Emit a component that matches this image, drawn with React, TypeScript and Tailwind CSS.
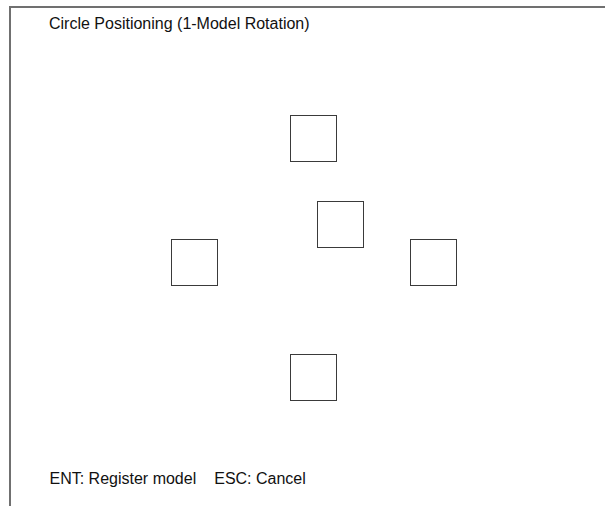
import React from "react";

const squares = [
  { left: "left-[279px]", top: "top-[107px]" },
  { left: "left-[306px]", top: "top-[193px]" },
  { left: "left-[160px]", top: "top-[231px]" },
  { left: "left-[399px]", top: "top-[231px]" },
  { left: "left-[279px]", top: "top-[346px]" },
];

const App = () => {
  return (
    <div className="w-[605px] h-[506px] bg-white overflow-hidden font-['Liberation_Sans',Arial,sans-serif] text-[16px] leading-[18px] text-[#111]">
      <div className="relative ml-[9px] mt-[6px] h-[500px] border-l-2 border-t-2 border-[#707070] flex flex-col">
        <h1 className="pl-[38px] pt-[6.5px] font-normal">
          Circle Positioning (1-Model Rotation)
        </h1>

        <div className="flex-1" />

        {squares.map((sq, idx) => (
          <div
            key={idx}
            className={`absolute ${sq.left} ${sq.top} w-[47px] h-[47px] border-[1.5px] border-[#3a3a3a]`}
          />
        ))}

        <p className="pl-[38.5px] pb-[18.5px] flex gap-[18px]">
          <span>ENT: Register model</span>
          <span>ESC: Cancel</span>
        </p>
      </div>
    </div>
  );
};

export default App;
